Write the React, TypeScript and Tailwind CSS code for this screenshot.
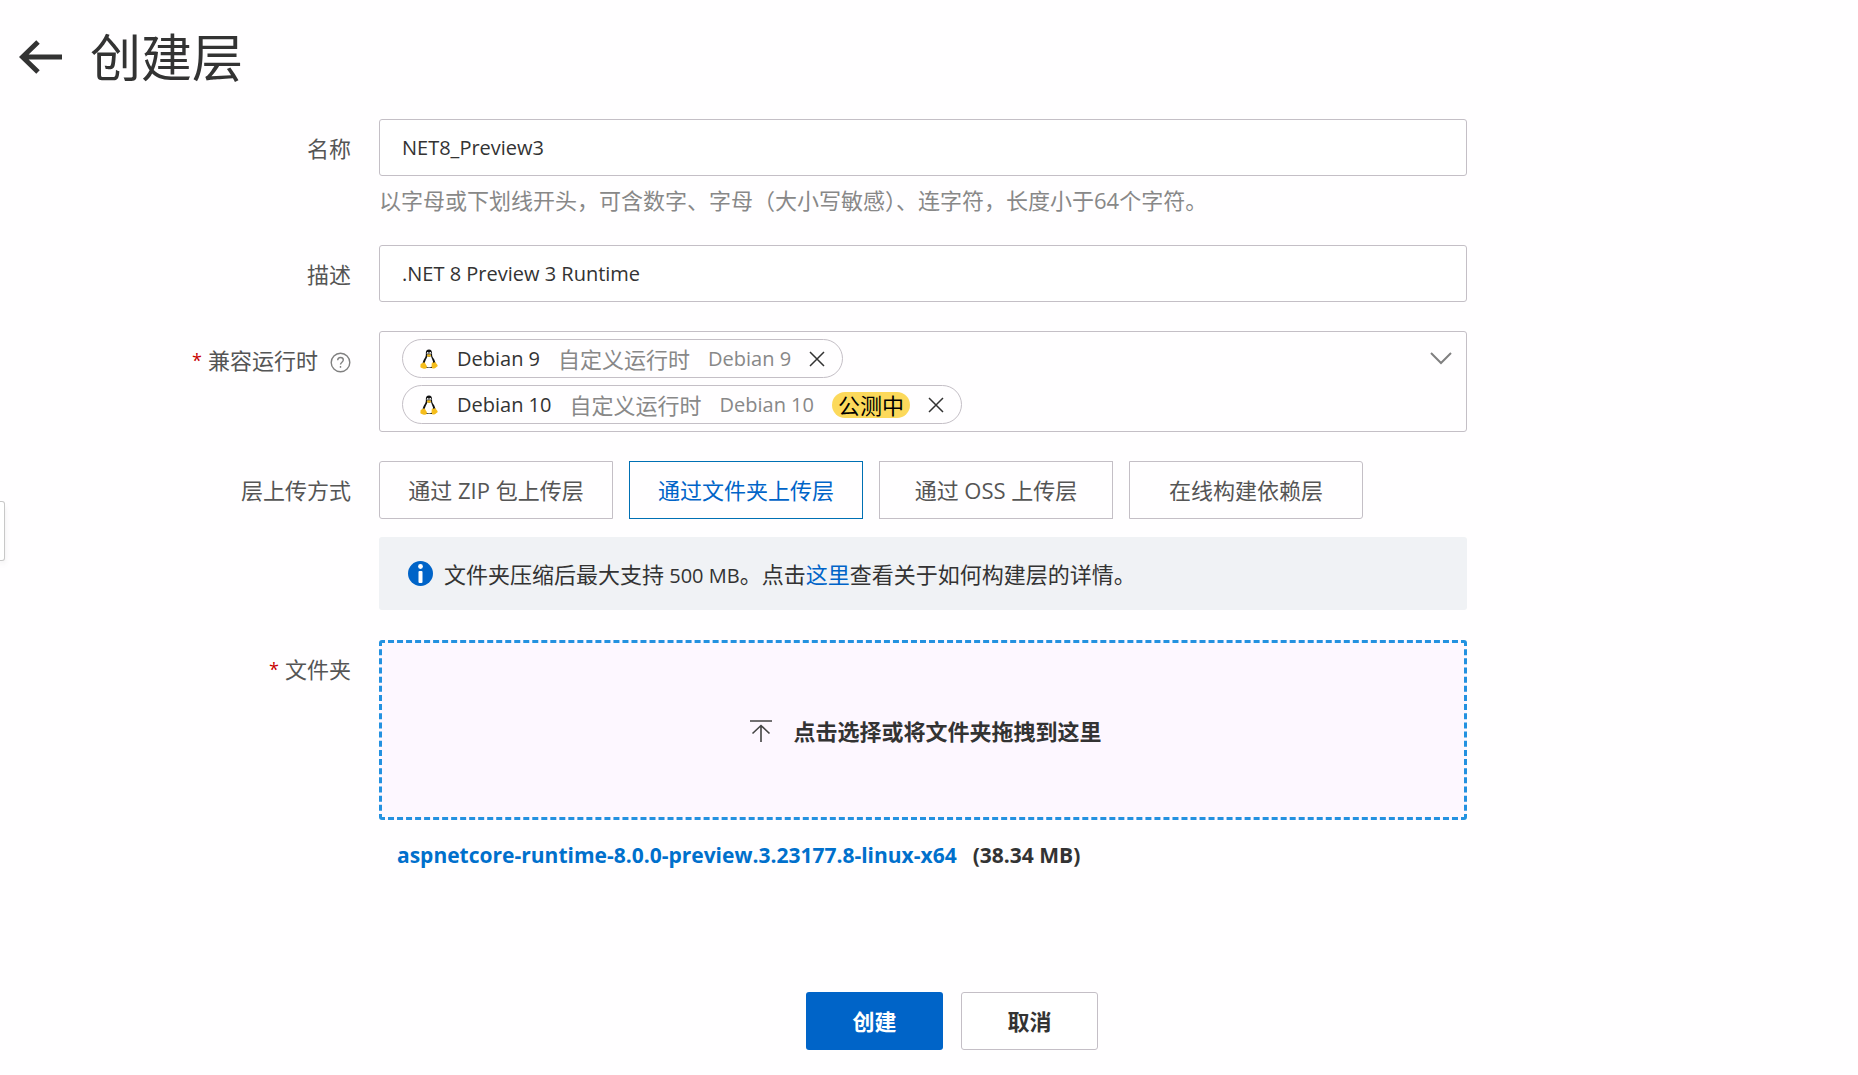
import { useState, type ReactNode } from "react";

function Tux() {
  return (
    <svg width="18" height="20" viewBox="0 0 36 40" aria-hidden="true">
      <path d="M18 1c-4.600 0-6.500 3-6.300 7.500.2 4.500-.2 6.500-2.700 10.500C6.500 23 4.500 27 5 33l7 5h12l7-5c.6-6-1.500-11-4.500-15-2.200-3-2.400-5-2.400-9C24.100 4 22.300 1 18 1z" fill="#111" />
      <path d="M15 14c2 2 4.500 2 7 0 .6 4 4.500 9 4.500 15 0 5-3.500 8-8.500 8s-8.500-3-8.500-8c0-6 4.500-10 5.500-15z" fill="#fff" />
      <ellipse cx="15.500" cy="8.500" rx="1.800" ry="2.500" fill="#fff" />
      <ellipse cx="20.500" cy="8.500" rx="2" ry="2.500" fill="#fff" />
      <circle cx="16" cy="9" r="1" fill="#111" />
      <circle cx="20" cy="9" r="1" fill="#111" />
      <path d="M13.500 12.500c2-2.500 6.500-2.500 9 0-1 2.200-3 3.200-4.500 3.200s-3.500-1-4.500-3.200z" fill="#f0b91a" />
      <path d="M3 29c3 0 3.500-3 5.500-2.500 2 .6 2.500 4 4.500 6.500 2 2.800.5 6.500-3.500 6.500C7 39.500 4.500 38 2 37.300c-2-.6-1-2.600-1-4.600C1 31 1.500 29 3 29z" fill="#f5bd1c" />
      <path d="M33 29.500c-1.500-1-1-3-3-3.500-1.500 1.800-3.500 1.800-5 .3-2 .7-1.500 4-1.800 7.200-.3 3.500 1.300 6.500 4.800 5.500 2.500-.8 4.500-3 6.500-4.200 1.700-1.100.5-3.800-1.500-5.300z" fill="#f5bd1c" />
    </svg>
  );
}

function FormRow({ label, htmlFor, required, help, children, className = "" }: {
  label: string;
  htmlFor?: string;
  required?: boolean;
  help?: boolean;
  children: ReactNode;
  className?: string;
}) {
  return (
    <div className={`flex gap-7 ${className}`}>
      <div className="flex h-[58px] w-[351px] shrink-0 items-center justify-end text-[#555]">
        {required && <span className="mr-1.5 text-lg text-[#c80000]">*</span>}
        <label htmlFor={htmlFor}>{label}</label>
        {help && (
          <button type="button" aria-label="帮助" className="mt-1 ml-3">
            <svg width="21" height="21" viewBox="0 0 21 21" fill="none" stroke="#808080" strokeWidth="1.4">
              <circle cx="10.500" cy="10.500" r="9.300" />
              <path d="M7.700 8.300c0-1.700 1.200-2.800 2.800-2.800s2.800 1.100 2.800 2.600c0 2-2.800 2.200-2.800 4.400" />
              <path d="M10.500 14v1.800" />
            </svg>
          </button>
        )}
      </div>
      <div className="w-full max-w-[1088px] min-w-0">{children}</div>
    </div>
  );
}

function RuntimeTag({ name, beta, onRemove }: { name: string; beta?: boolean; onRemove: () => void }) {
  return (
    <li className="flex h-[39px] items-center rounded-full border border-[#c4bfc6] px-[17px]">
      <Tux />
      <span className="ml-[19px] text-xl text-[#333]">{name}</span>
      <span className="ml-[18px] text-[#888]">自定义运行时</span>
      <span className="ml-[18px] text-xl text-[#888]">{name}</span>
      {beta && (
        <span className="ml-[18px] flex h-[26px] items-center rounded-full bg-[#fcd95b] px-1.5 text-black">公测中</span>
      )}
      <button type="button" aria-label={`移除 ${name}`} onClick={onRemove} className="ml-[18px]">
        <svg width="16" height="16" viewBox="0 0 16 16" stroke="#333" strokeWidth="1.5" fill="none">
          <path d="M1 1l14 14M15 1L1 15" />
        </svg>
      </button>
    </li>
  );
}

const methods = ["通过 ZIP 包上传层", "通过文件夹上传层", "通过 OSS 上传层", "在线构建依赖层"];
const fieldClass =
  "block h-[57px] w-full rounded-[3px] border border-[#c4bfc6] bg-white px-[22px] text-xl text-[#333] outline-none focus:border-[#0064c8]";

export default function App() {
  const [name, setName] = useState("NET8_Preview3");
  const [description, setDescription] = useState(".NET 8 Preview 3 Runtime");
  const [method, setMethod] = useState(methods[1]);
  const [runtimes, setRuntimes] = useState([
    { name: "Debian 9", beta: false },
    { name: "Debian 10", beta: true },
  ]);

  return (
    <div className="relative min-h-screen bg-[#fffeff] pb-6 font-['Open_Sans','Noto_Sans_CJK_SC',sans-serif] text-[22px] leading-8">
      <button
        type="button"
        aria-label="展开侧栏"
        className="absolute top-[501px] left-0 h-[60px] w-[5px] rounded-r-[3px] border border-l-0 border-[#c8c8c8] bg-white shadow-md"
      />

      <header className="flex h-[119px] items-center gap-7 pb-1.5 pl-[19px]">
        <a href="#back" aria-label="返回">
          <svg width="43" height="34" viewBox="0 0 43 34" fill="none" stroke="#333" strokeWidth="5">
            <path d="M43 17H4M19 2L3.500 17L19 32" />
          </svg>
        </a>
        <h1 className="text-[51px] leading-[60px] text-[#333]">创建层</h1>
      </header>

      <form onSubmit={(e) => e.preventDefault()}>
        <FormRow label="名称" htmlFor="layer-name">
          <input id="layer-name" className={fieldClass} value={name} onChange={(e) => setName(e.target.value)} />
          <p className="mt-2 text-[#888]">以字母或下划线开头，可含数字、字母（大小写敏感）、连字符，长度小于64个字符。</p>
        </FormRow>

        <FormRow label="描述" htmlFor="layer-description" className="mt-[29px]">
          <input
            id="layer-description"
            className={fieldClass}
            value={description}
            onChange={(e) => setDescription(e.target.value)}
          />
        </FormRow>

        <FormRow label="兼容运行时" htmlFor="runtime-toggle" required help className="mt-7">
          <div className="flex items-start justify-between rounded-[3px] border border-[#c4bfc6] bg-[#fffeff] py-[7px] pr-3.5 pl-[22px]">
            <ul className="flex flex-col items-start gap-[7px]">
              {runtimes.map((r) => (
                <RuntimeTag
                  key={r.name}
                  name={r.name}
                  beta={r.beta}
                  onRemove={() => setRuntimes(runtimes.filter((x) => x.name !== r.name))}
                />
              ))}
            </ul>
            <button id="runtime-toggle" type="button" aria-haspopup="listbox" className="mt-3">
              <svg width="22" height="14" viewBox="0 0 22 14" fill="none" stroke="#808080" strokeWidth="2">
                <path d="M1 2l10 10L21 2" />
              </svg>
            </button>
          </div>
        </FormRow>

        <FormRow label="层上传方式" className="mt-[29px]">
          <div role="radiogroup" aria-label="层上传方式" className="flex flex-wrap gap-4">
            {methods.map((m) => (
              <label
                key={m}
                className="flex h-[58px] w-[234px] cursor-pointer items-center justify-center border border-[#c4bfc6] text-[#555] first:rounded-l-[3px] last:rounded-r-[3px] has-checked:border-[#0070b4] has-checked:text-[#0064c8]"
              >
                <input
                  type="radio"
                  name="method"
                  className="sr-only"
                  checked={method === m}
                  onChange={() => setMethod(m)}
                />
                {m}
              </label>
            ))}
          </div>
          <div className="mt-[18px] flex h-[73px] items-center gap-[11px] rounded-[3px] bg-[#f0f2f5] px-[29px] text-[#333]">
            <svg width="25" height="25" viewBox="0 0 25 25" aria-hidden="true">
              <circle cx="12.500" cy="12.500" r="12.500" fill="#0064c8" />
              <circle cx="12.500" cy="5.500" r="2.400" fill="#fff" />
              <rect x="10.500" y="10" width="4" height="12" rx="1" fill="#fff" />
            </svg>
            <p>
              文件夹压缩后最大支持<span className="text-xl"> 500 MB</span>。点击
              <a href="#docs" className="text-[#0064c8]">这里</a>
              查看关于如何构建层的详情。
            </p>
          </div>
        </FormRow>

        <FormRow label="文件夹" htmlFor="folder-picker" required className="mt-[30px]">
          <button
            id="folder-picker"
            type="button"
            className="flex h-[180px] w-full items-center justify-center gap-[21px] rounded-[3px] border-3 border-dashed border-[#2391e0] bg-[#fdf7ff] pt-0.5 pl-1.5 font-bold text-[#333]"
          >
            <svg width="22" height="22" viewBox="0 0 22 22" fill="none" stroke="#444" strokeWidth="1.6" aria-hidden="true">
              <path d="M0 1h22M11 22V6M2.500 13.500L11 5.500l8.500 8" />
            </svg>
            点击选择或将文件夹拖拽到这里
          </button>
          <p className="mt-[19px] flex gap-4 pl-[18px] text-[21px] font-bold text-[#333]">
            <a href="#file" className="text-[#0070cc]">aspnetcore-runtime-8.0.0-preview.3.23177.8-linux-x64</a>
            <span>(38.34 MB)</span>
          </p>
        </FormRow>

        <div className="mt-[121px] flex gap-7">
          <div className="w-[351px] shrink-0" />
          <div className="flex w-full max-w-[1088px] justify-center gap-[18px] pl-[58px] font-bold">
            <button type="submit" className="h-[58px] w-[137px] rounded-[3px] bg-[#0064c8] text-white">创建</button>
            <button type="button" className="h-[58px] w-[137px] rounded-[3px] border border-[#c4bfc6] bg-white text-[#333]">取消</button>
          </div>
        </div>
      </form>
    </div>
  );
}
